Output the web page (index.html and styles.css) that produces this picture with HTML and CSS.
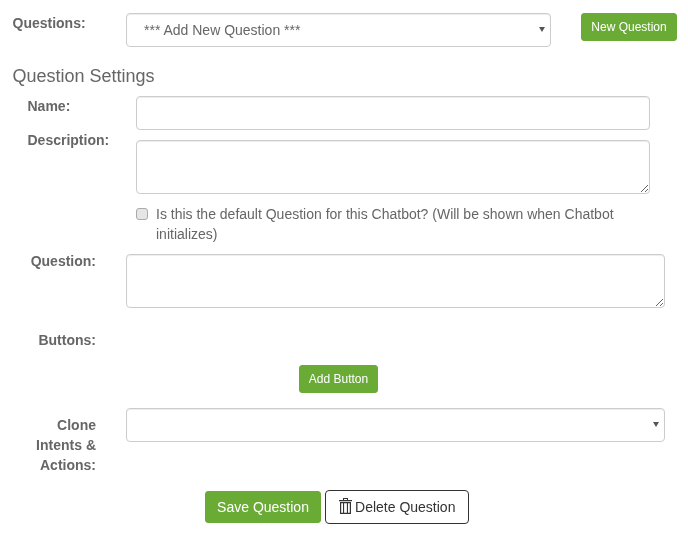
FILE: index.html
```html
<!DOCTYPE html>
<html lang="en">
<head>
<meta charset="utf-8">
<title>Question Settings</title>
<link rel="stylesheet" href="styles.css">
</head>
<body>
<form class="form">
  <div class="row row-top">
    <label class="label label-top" for="questions">Questions:</label>
    <div class="select-wrap select-top">
      <select id="questions" class="control select select-indent"><option>*** Add New Question ***</option></select>
    </div>
    <button type="button" class="btn btn-green btn-small btn-new">New Question</button>
  </div>

  <h3 class="heading">Question Settings</h3>

  <div class="row row-gap">
    <label class="label label-inner" for="name">Name:</label>
    <input id="name" class="control input-inner" type="text">
  </div>
  <div class="row row-gap">
    <label class="label label-inner label-up" for="desc">Description:</label>
    <textarea id="desc" class="control input-inner area"></textarea>
  </div>
  <div class="row row-gap check-row">
    <input id="default" class="check" type="checkbox">
    <label class="check-text" for="default">Is this the default Question for this Chatbot? (Will be shown when Chatbot initializes)</label>
  </div>
  <div class="row row-gap">
    <label class="label label-right label-lift" for="question">Question:</label>
    <textarea id="question" class="control input-wide area"></textarea>
  </div>
  <div class="row row-buttons">
    <span class="label label-right">Buttons:</span>
  </div>
  <div class="add-row">
    <button type="button" class="btn btn-green btn-small">Add Button</button>
  </div>
  <div class="row row-clone">
    <label class="label label-right label-clone" for="clone">Clone Intents &amp; Actions:</label>
    <div class="select-wrap select-wide">
      <select id="clone" class="control select"><option></option></select>
    </div>
  </div>
  <div class="actions">
    <button type="button" class="btn btn-green btn-save">Save Question</button>
    <button type="button" class="btn btn-outline">
      <svg class="trash" viewBox="0 0 13 16" width="13" height="16" aria-hidden="true">
        <path fill="#333" fill-rule="evenodd" d="M4 0h5v2h4v1.200H0V2h4zM5 1v1h3V1z"/>
        <path fill="#333" fill-rule="evenodd" d="M1 4h11v12H1zM2.200 5.200v9.600h1.800V5.200zm2.900 0v9.600h2.800V5.200zm3.900 0v9.600h1.800V5.200z"/>
      </svg>
      Delete Question
    </button>
  </div>
</form>
</body>
</html>
```
FILE: styles.css
```css
* { box-sizing: border-box; }
html, body { margin: 0; padding: 0; background: #fff; }
body {
  font-family: "Liberation Sans", Arial, sans-serif;
  font-size: 14px;
  line-height: 20px;
  color: #666;
}
.form { width: 677px; padding: 13px 0 0 0; will-change: transform; }
.row { display: flex; align-items: flex-start; }
.row-gap { margin-bottom: 10px; }

.label { font-weight: 700; color: #666; display: block; flex: none; }
.label-top { width: 126px; padding-left: 12.5px; }
.label-inner { width: 136px; padding-left: 27.5px; }
.label-up { margin-top: -10px; }
.label-right { width: 126px; padding-right: 30px; text-align: right; }
.label-lift { margin-top: -3px; }
.label-clone { padding-left: 30px; padding-top: 7px; }

.control {
  display: block;
  height: 34px;
  margin: 0;
  padding: 6px 12px;
  border: 1px solid #ccc;
  border-radius: 4px;
  background: #fff;
  font: inherit;
  color: #666;
  box-shadow: inset 0 1px 1px rgba(0,0,0,.075);
}
.select-wrap { position: relative; }
.select-wrap::after {
  content: "";
  position: absolute;
  right: 6px;
  top: 14px;
  border-left: 3px solid transparent;
  border-right: 3px solid transparent;
  border-top: 5px solid #555;
  pointer-events: none;
}
.select { width: 100%; appearance: none; -webkit-appearance: none; }
.select-indent { padding-left: 17px; }
.select-top { width: 425px; flex: none; }
.select-wide { width: 539px; flex: none; }
.input-inner { width: 514px; flex: none; }
.input-wide { width: 539px; flex: none; }
.area { height: 54px; resize: vertical; }

.heading {
  margin: 19px 0 10px 12.5px;
  font-size: 18px;
  line-height: 20px;
  font-weight: 400;
  color: #666;
}
.check-row { padding-left: 136px; width: 650px; }
.check {
  appearance: none;
  -webkit-appearance: none;
  flex: none;
  width: 12px;
  height: 12px;
  margin: 4px 8px 0 0;
  border: 1px solid #aaa;
  border-radius: 3px;
  background: #e6e6e6;
}

.row-buttons { margin-top: 22px; }
.add-row { margin-top: 15px; display: flex; justify-content: center; }
.row-clone { margin-top: 15px; }

.btn {
  display: inline-block;
  font: inherit;
  cursor: pointer;
  border-radius: 3px;
  border: 1px solid transparent;
}
.btn-green { background: #6aab36; border-color: #6aab36; color: #fff; }
.btn-small { height: 28px; padding: 0 9px; font-size: 12px; line-height: 18px; }
.btn-new { width: 96px; flex: none; margin-left: 30px; padding: 0; }
.actions {
  margin-top: 15px;
  padding-right: 3px;
  display: flex;
  justify-content: center;
  align-items: center;
  gap: 4px;
}
.btn-save { width: 116px; height: 32px; padding: 0; }
.btn-outline {
  width: 144px;
  height: 34px;
  padding: 0;
  background: #fff;
  border-color: #333;
  border-radius: 4px;
  color: #333;
  display: flex;
  align-items: center;
  justify-content: center;
  gap: 3.5px;
}
.trash { flex: none; margin-top: -2px; }
```
